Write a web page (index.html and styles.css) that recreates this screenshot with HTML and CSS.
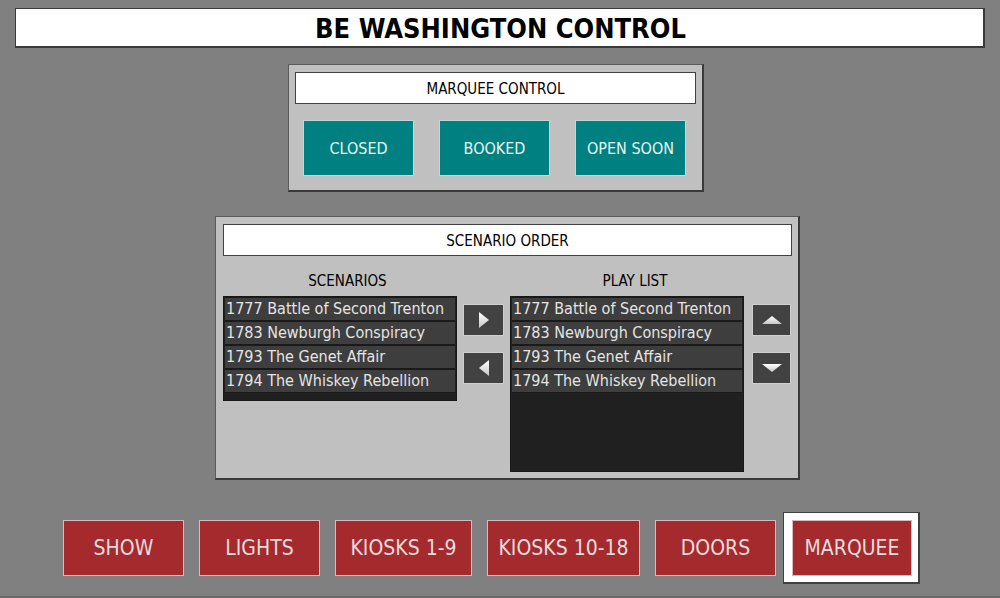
FILE: index.html
```html
<!DOCTYPE html>
<html>
<head>
<meta charset="utf-8">
<link rel="stylesheet" href="styles.css">
</head>
<body>
<div class="screen">
  <div class="title">BE WASHINGTON CONTROL</div>

  <div class="panel marquee">
    <div class="header">MARQUEE CONTROL</div>
    <div class="mq-buttons">
      <div class="teal-btn">CLOSED</div>
      <div class="teal-btn">BOOKED</div>
      <div class="teal-btn">OPEN SOON</div>
    </div>
  </div>

  <div class="panel scenario">
    <div class="header">SCENARIO ORDER</div>
    <div class="cols">
      <div class="col">
        <div class="label label-left">SCENARIOS</div>
        <div class="list short">
          <div class="item">1777 Battle of Second Trenton</div>
          <div class="item">1783 Newburgh Conspiracy</div>
          <div class="item">1793 The Genet Affair</div>
          <div class="item">1794 The Whiskey Rebellion</div>
        </div>
      </div>
      <div class="arrows arrows-mid">
        <div class="arrow-btn"><svg width="14" height="18" viewBox="0 0 14 18"><defs><linearGradient id="gr" x1="0" y1="0" x2="0" y2="1"><stop offset="0" stop-color="#ffffff"/><stop offset="1" stop-color="#c8c8c8"/></linearGradient></defs><polygon points="2,1 12,9 2,17" fill="url(#gr)"/></svg></div>
        <div class="arrow-btn"><svg width="14" height="18" viewBox="0 0 14 18"><polygon points="12,1 2,9 12,17" fill="url(#gr)"/></svg></div>
      </div>
      <div class="col">
        <div class="label label-right">PLAY LIST</div>
        <div class="list tall">
          <div class="item">1777 Battle of Second Trenton</div>
          <div class="item">1783 Newburgh Conspiracy</div>
          <div class="item">1793 The Genet Affair</div>
          <div class="item">1794 The Whiskey Rebellion</div>
        </div>
      </div>
      <div class="arrows arrows-side">
        <div class="arrow-btn narrow"><svg width="22" height="12" viewBox="0 0 22 12"><polygon points="1,10 11,2 21,10" fill="url(#gr)"/></svg></div>
        <div class="arrow-btn narrow"><svg width="22" height="12" viewBox="0 0 22 12"><polygon points="1,2 21,2 11,10" fill="url(#gr)"/></svg></div>
      </div>
    </div>
  </div>

  <div class="nav">
    <div class="red-btn w121">SHOW</div>
    <div class="red-btn w121">LIGHTS</div>
    <div class="red-btn w137">KIOSKS 1-9</div>
    <div class="red-btn w153">KIOSKS 10-18</div>
    <div class="red-btn w121">DOORS</div>
    <div class="selected"><div class="red-btn w120">MARQUEE</div></div>
  </div>
</div>
</body>
</html>
```

FILE: styles.css
```css
* { box-sizing: border-box; }
html, body { margin: 0; padding: 0; }
body {
  background: #808080;
  font-family: "DejaVu Sans Condensed", "DejaVu Sans", sans-serif;
}
.screen {
  width: 1000px;
  height: 598px;
  background: #808080;
  border-bottom: 2px solid #6a6a6a;
  display: flex;
  flex-direction: column;
  padding-top: 8px;
}
.title {
  margin-left: 15px;
  width: 970px;
  height: 40px;
  background: #ffffff;
  border: 1px solid #3a3a3a;
  border-right-width: 2px;
  border-bottom-width: 2px;
  font-weight: bold;
  font-size: 27px;
  color: #000;
  display: flex;
  align-items: center;
  justify-content: center;
  padding-left: 2px;
  padding-top: 2px;
}
.panel {
  background: #c0c0c0;
  border: 1px solid #5a5a5a;
  border-right: 2px solid #3a3a3a;
  border-bottom: 2px solid #3a3a3a;
  padding: 7px 7px 0 6px;
}
.header {
  background: #ffffff;
  border: 1px solid #404040;
  height: 32px;
  display: flex;
  align-items: center;
  justify-content: center;
  font-size: 15px;
  color: #000;
  padding-top: 2px;
}
.marquee {
  margin-top: 16px;
  margin-left: 288px;
  width: 416px;
  height: 128px;
}
.marquee .header { width: 401px; }
.mq-buttons {
  display: flex;
  gap: 25px;
  margin-top: 16px;
  padding-left: 8px;
}
.teal-btn {
  width: 111px;
  height: 56px;
  background: #008080;
  border: 1px solid #b8dcdc;
  color: #e8f4f4;
  font-size: 16px;
  display: flex;
  align-items: center;
  justify-content: center;
  padding-top: 1px;
}
.scenario {
  margin-top: 24px;
  margin-left: 215px;
  width: 585px;
  height: 264px;
  padding-left: 7px;
}
.scenario .header { width: 569px; }
.cols {
  display: flex;
  margin-top: 14px;
}
.col { display: flex; flex-direction: column; }
.label {
  height: 26px;
  font-size: 15px;
  color: #000;
  text-align: center;
  line-height: 22px;
}
.label-left { padding-left: 15px; }
.label-right { padding-left: 16px; }
.list {
  width: 234px;
  background: #202020;
  border: 1px solid #181818;
  padding: 0 1px;
}
.list.short { height: 105px; }
.list.tall { height: 176px; }
.item {
  height: 24px;
  background: #3e3e3e;
  border-top: 1px solid #1a1a1a;
  border-bottom: 1px solid #1a1a1a;
  color: #e4e4e4;
  font-size: 16px;
  line-height: 22px;
  padding-left: 1px;
  white-space: nowrap;
  overflow: hidden;
}
.arrows {
  display: flex;
  flex-direction: column;
  gap: 16px;
  padding-top: 34px;
}
.arrows-mid { width: 55px; padding-left: 6px; }
.arrows-side { padding-left: 8px; }
.arrow-btn {
  width: 41px;
  height: 32px;
  background: #424242;
  border: 1px solid #cfcfcf;
  display: flex;
  align-items: center;
  justify-content: center;
}
.arrow-btn.narrow { width: 39px; }
.nav {
  display: flex;
  align-items: center;
  gap: 15px;
  margin-top: 32px;
  margin-left: 63px;
  height: 72px;
}
.red-btn {
  height: 56px;
  background: #a52a2e;
  border: 1px solid #d8b8b8;
  color: #eadcdc;
  font-size: 21px;
  display: flex;
  align-items: center;
  justify-content: center;
  white-space: nowrap;
}
.w121 { width: 121px; }
.w120 { width: 120px; }
.w137 { width: 137px; }
.w153 { width: 153px; }
.selected {
  margin-left: -8px;
  width: 137px;
  height: 72px;
  background: #ffffff;
  border: 1px solid #404040;
  border-right-width: 2px;
  border-bottom-width: 2px;
  padding: 7px 0 0 8px;
}
```
